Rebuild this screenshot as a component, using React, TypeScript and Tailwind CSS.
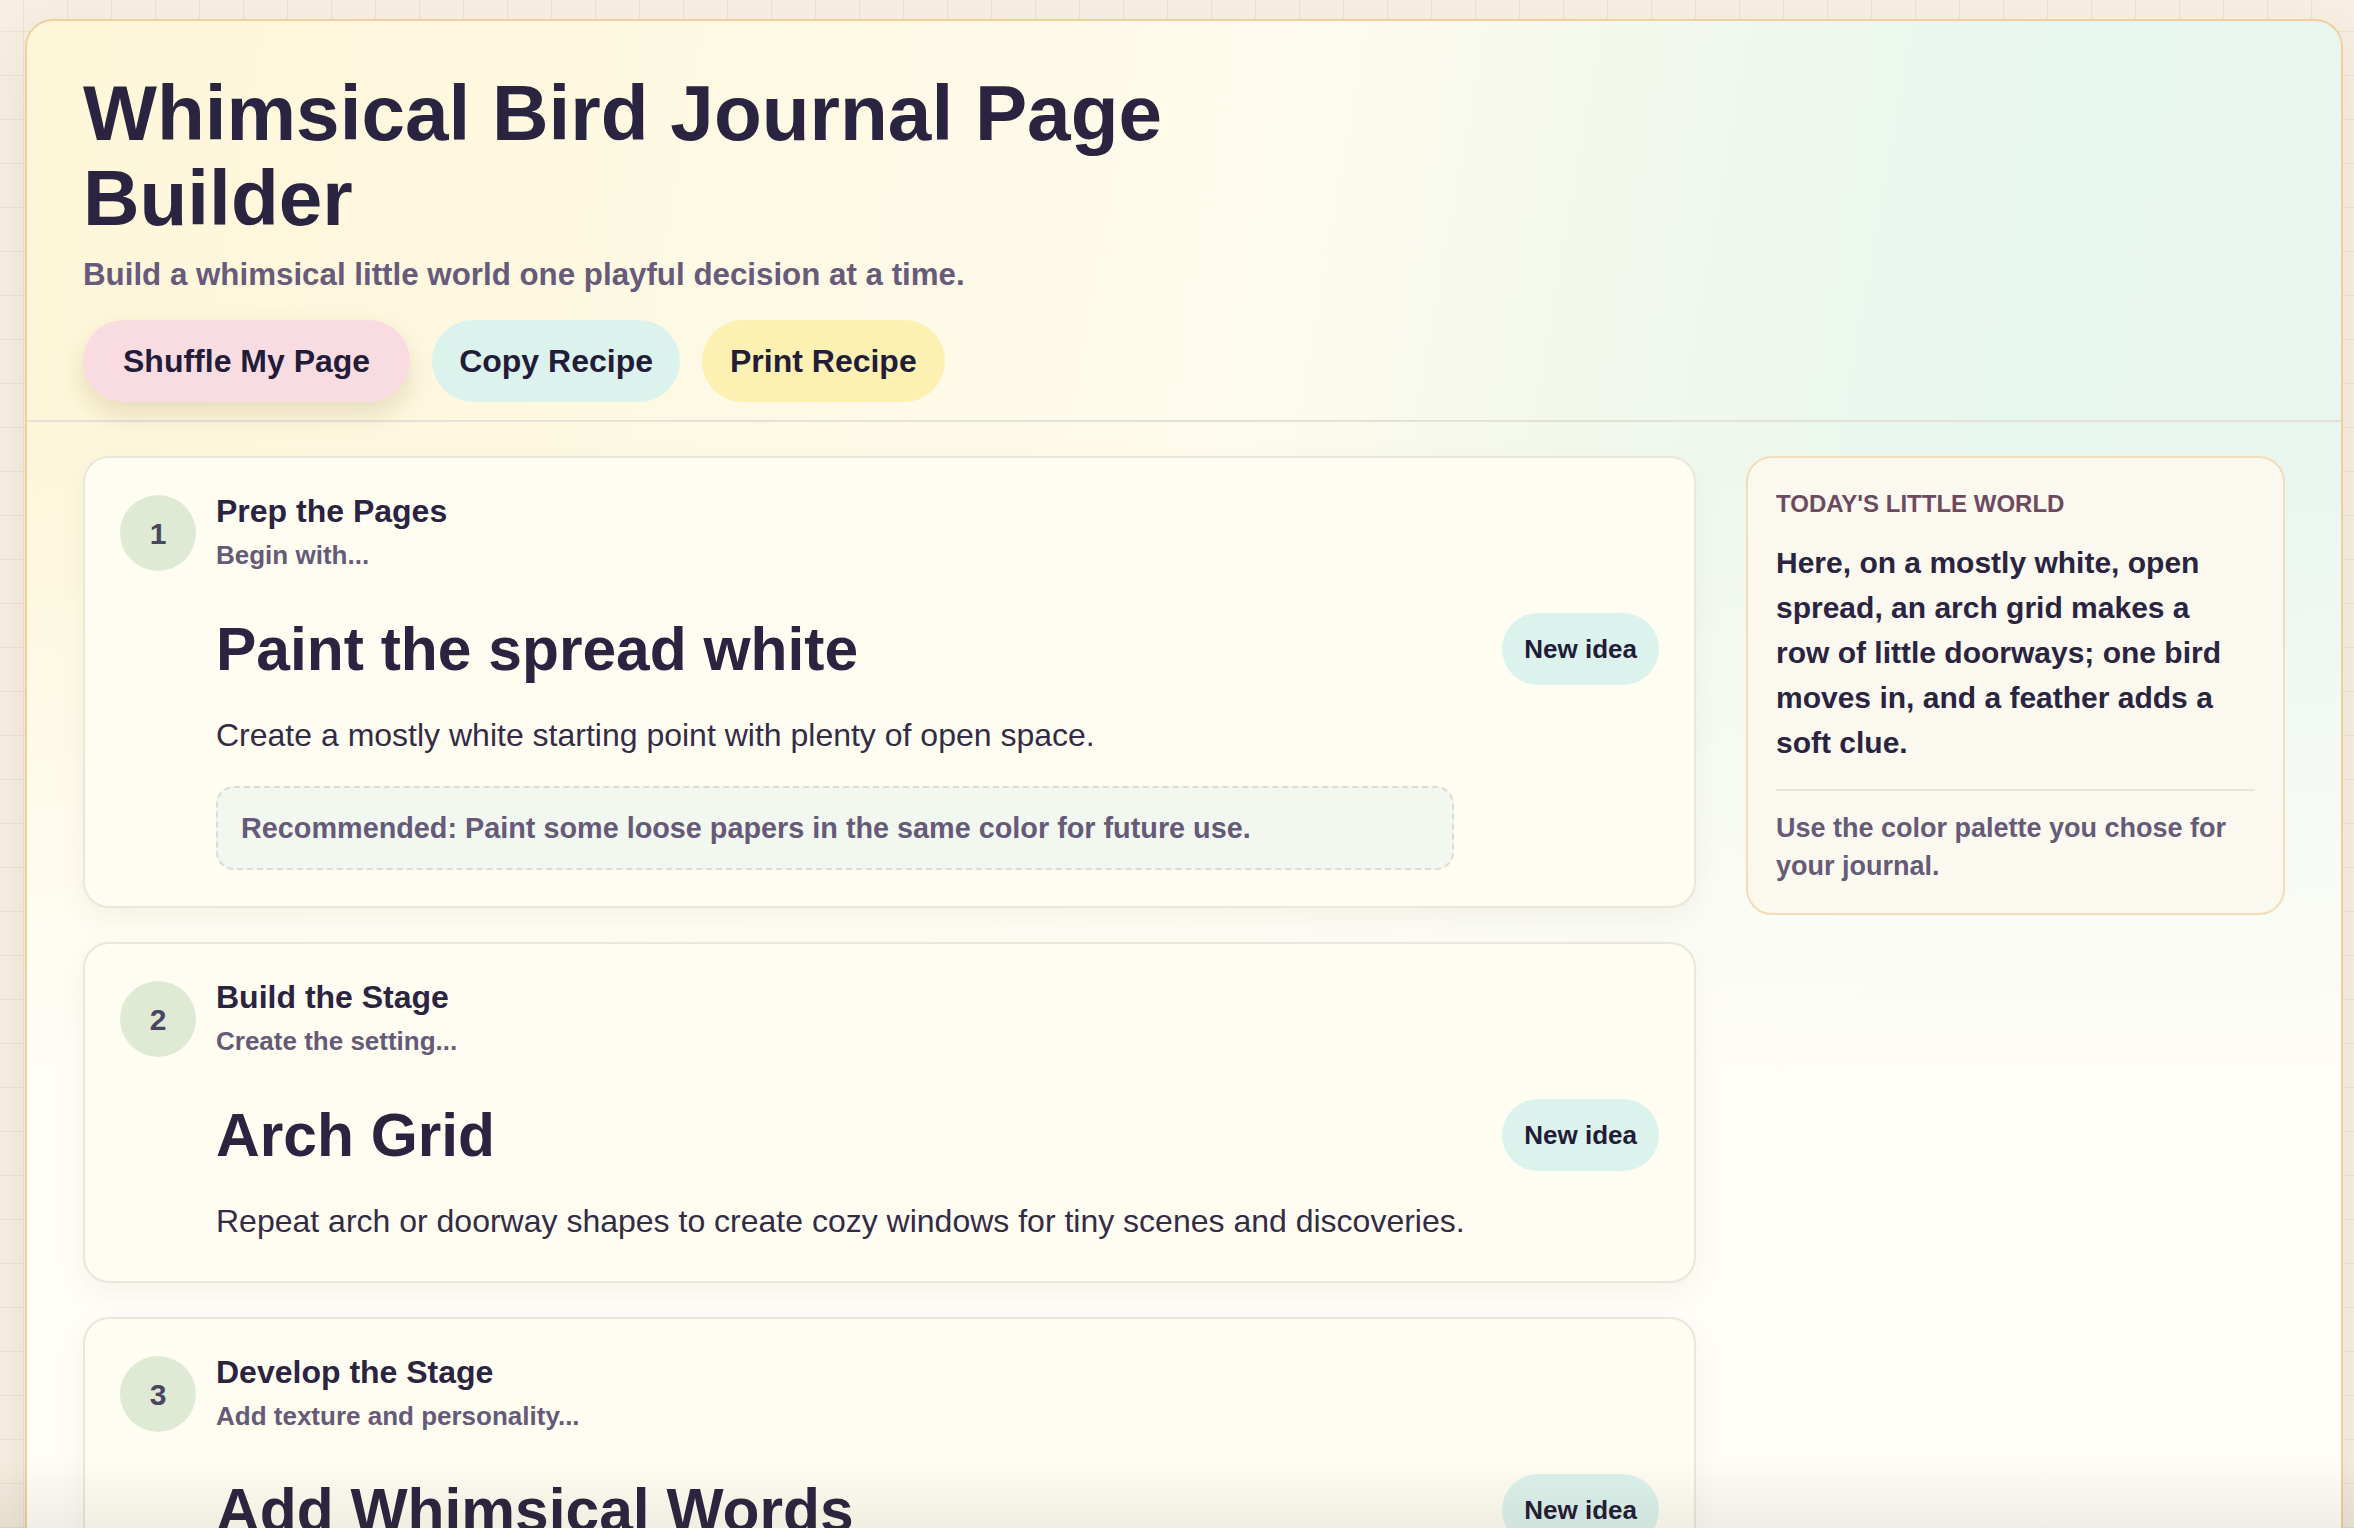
import { useState } from 'react'

interface Step {
  phase: string
  lead: string
  title: string
  description: string
  tip?: string
}

const steps: Step[] = [
  {
    phase: 'Prep the Pages',
    lead: 'Begin with...',
    title: 'Paint the spread white',
    description: 'Create a mostly white starting point with plenty of open space.',
    tip: 'Recommended: Paint some loose papers in the same color for future use.',
  },
  {
    phase: 'Build the Stage',
    lead: 'Create the setting...',
    title: 'Arch Grid',
    description: 'Repeat arch or doorway shapes to create cozy windows for tiny scenes and discoveries.',
  },
  {
    phase: 'Develop the Stage',
    lead: 'Add texture and personality...',
    title: 'Add Whimsical Words',
    description: 'Tuck a short phrase or a made-up bird name somewhere on the spread.',
  },
]

function StepCard({ step, index }: { step: Step; index: number }) {
  return (
    <section className="rounded-[26px] border-2 border-[#e9e6dc] bg-[#fffdf2] px-[35px] pt-[33px] pb-[36px] shadow-[0_10px_28px_rgba(90,80,50,0.06)]">
      {/* 步骤编号 + 阶段标题 */}
      <div className="flex items-center gap-5">
        <div className="flex h-[76px] w-[76px] shrink-0 items-center justify-center rounded-full bg-[#dfead5] text-[30px] font-bold text-[#4a4560]">
          {index + 1}
        </div>
        <div>
          <h3 className="text-[32px] font-bold leading-[40px] text-[#2a2440]">{step.phase}</h3>
          <p className="mt-[5px] text-[26px] font-bold leading-[39px] text-[#655a78]">{step.lead}</p>
        </div>
      </div>

      <div className="pl-[96px]">
        <div className="mt-[38px] flex items-center justify-between gap-6">
          <h2 className="text-[60.5px] font-bold leading-[72px] text-[#2a2440]">{step.title}</h2>
          <button className="shrink-0 rounded-full bg-[#dcf2ec] px-[22px] py-4 text-[26px] font-bold leading-[40px] text-[#221c38]">
            New idea
          </button>
        </div>
        <p className="mt-[26px] text-[32px] leading-[48px] text-[#342b45]">{step.description}</p>
        {step.tip && (
          <div className="mt-[27px] max-w-[1238px] rounded-[18px] border-2 border-dashed border-[#dcdcd3] bg-[#f2f7ef] px-[23px] py-[18.5px] text-[28.8px] font-bold leading-[43px] text-[#655a78]">
            {step.tip}
          </div>
        )}
      </div>
    </section>
  )
}

export default function App() {
  const [order] = useState(steps)

  return (
    <div className="min-h-screen bg-[#f6efe2] bg-[linear-gradient(#ebe3d3_1px,transparent_1px),linear-gradient(90deg,#ebe3d3_1px,transparent_1px)] bg-[size:44px_44px] bg-[position:23px_31px] pt-[19px] pr-[11px] pl-[25px] pb-10 font-['Liberation_Sans',Arial,sans-serif]">
      <main className="overflow-hidden rounded-[28px] border-2 border-[#f1cf9f] bg-[#fffdf6] bg-[linear-gradient(180deg,transparent_0px,transparent_420px,#fffdf7_1050px),linear-gradient(100deg,#fef6d8_0%,#fefbec_48%,#e7f6ee_78%,#e9f6ef_100%)] shadow-[0_20px_50px_rgba(120,90,40,0.10)]">
        <header className="border-b-2 border-[#e4e1d6] px-14 pt-[50px] pb-[18px]">
          <h1 className="max-w-[1150px] text-[78.3px] font-bold leading-[85px] text-[#2a2440]">
            Whimsical Bird Journal Page Builder
          </h1>
          <p className="mt-[11px] text-[31.3px] font-bold leading-[46px] text-[#675a7a]">
            Build a whimsical little world one playful decision at a time.
          </p>
          <div className="mt-[22px] flex items-center gap-[22px]">
            <button className="rounded-full bg-[#f9dce2] px-10 py-[17px] text-[32px] font-bold leading-[48px] text-[#221c38] shadow-[0_12px_26px_rgba(120,100,50,0.18)]">
              Shuffle My Page
            </button>
            <button className="rounded-full bg-[#dcf2ec] px-[27px] py-[17px] text-[32px] font-bold leading-[48px] text-[#221c38]">
              Copy Recipe
            </button>
            <button className="rounded-full bg-[#fcf0b2] px-[28px] py-[17px] text-[32px] font-bold leading-[48px] text-[#221c38]">
              Print Recipe
            </button>
          </div>
        </header>

        <div className="grid grid-cols-[minmax(0,1fr)_539px] items-start gap-[50px] px-14 pt-[34px] pb-14">
          <div className="flex flex-col gap-[34px]">
            {order.map((step, i) => (
              <StepCard key={step.phase} step={step} index={i} />
            ))}
          </div>

          <aside className="rounded-[26px] border-2 border-[#f3dcb8] bg-[#fbf9ef] p-7">
            <h4 className="text-[24px] font-bold uppercase leading-[36px] text-[#6d4a60]">Today's little world</h4>
            <p className="mt-[18px] max-w-[466px] text-[30px] font-bold leading-[45px] text-[#2a2440]">
              Here, on a mostly white, open spread, an arch grid makes a row of little doorways; one bird moves in,
              and a feather adds a soft clue.
            </p>
            <p className="mt-6 border-t-2 border-[#e7e4da] pt-[18px] text-[27px] font-bold leading-[38px] text-[#655a78]">
              Use the color palette you chose for your journal.
            </p>
          </aside>
        </div>
      </main>

      {/* 底部淡出阴影 */}
      <div className="pointer-events-none fixed inset-x-0 bottom-0 h-[70px] bg-[linear-gradient(180deg,transparent,rgba(70,60,40,0.08))]" />
    </div>
  )
}
